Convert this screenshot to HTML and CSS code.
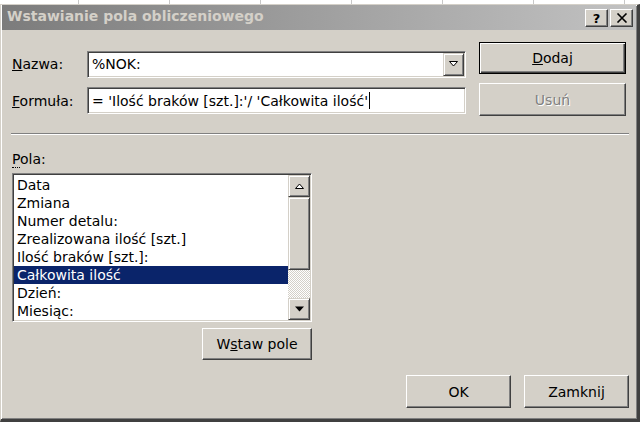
FILE: index.html
```html
<!DOCTYPE html>
<html lang="pl">
<head>
    <meta charset="utf-8">
    <title>Wstawianie pola obliczeniowego</title>
    <link rel="stylesheet" href="styles.css">
</head>
<body>
    <div class="sheet"></div>
    <div class="dialog">
        <div class="titlebar">
            <span class="title">Wstawianie pola obliczeniowego</span>
            <span class="tbtn help">?</span>
            <span class="tbtn close">
                <svg width="12" height="10" viewBox="0 0 12 10"><path d="M1.5 0.5 L10.5 9.5 M10.5 0.5 L1.5 9.5" stroke="#000" stroke-width="1.6" fill="none"/></svg>
            </span>
        </div>
        <div class="content">
            <div class="top">
                <div class="fields">
                    <label><u>N</u>azwa:</label>
                    <div class="field combo">
                        <span class="val">%NOK:</span>
                        <span class="drop"><svg width="9" height="6" viewBox="0 0 9 6"><path d="M0.5 0.5 H8.5 L4.5 5 Z" fill="#fff" stroke="#000" stroke-width="1"/></svg></span>
                    </div>
                    <label><u>F</u>ormuła:</label>
                    <div class="field">
                        <span class="val">= 'Ilość braków [szt.]:'/ 'Całkowita ilość'</span><span class="caret"></span>
                    </div>
                </div>
                <div class="side">
                    <div class="btn default"><u>D</u>odaj</div>
                    <div class="btn disabled">Usuń</div>
                </div>
            </div>
            <div class="sep"></div>
            <div class="fieldlist">
                <div class="list-label"><span class="dotted">P</span>ola:</div>
                <div class="listbox">
                    <ul class="items">
                        <li>Data</li>
                        <li>Zmiana</li>
                        <li>Numer detalu:</li>
                        <li>Zrealizowana ilość [szt.]</li>
                        <li>Ilość braków [szt.]:</li>
                        <li class="selected">Całkowita ilość</li>
                        <li>Dzień:</li>
                        <li>Miesiąc:</li>
                    </ul>
                    <div class="scrollbar">
                        <div class="sbtn"><svg width="9" height="6" viewBox="0 0 9 6"><path d="M0.5 5.5 H8.5 L4.5 1 Z" fill="#fff" stroke="#000" stroke-width="1"/></svg></div>
                        <div class="thumb"></div>
                        <div class="track"></div>
                        <div class="sbtn"><svg width="9" height="6" viewBox="0 0 9 6"><path d="M0 0.5 H9 L4.5 5.5 Z" fill="#000"/></svg></div>
                    </div>
                </div>
                <div class="btn insert">W<u>s</u>taw pole</div>
            </div>
            <div class="footer">
                <div class="btn">OK</div>
                <div class="btn">Zamknij</div>
            </div>
        </div>
    </div>
</body>
</html>
```

FILE: styles.css
```css
* { box-sizing: border-box; }
body { margin: 0; width: 640px; height: 422px; overflow: hidden; background: #fff; font-family: "DejaVu Sans", sans-serif; font-size: 14px; color: #000; }
.sheet { height: 4px; background: #fff linear-gradient(to right, #c8c8c8 1px, transparent 1px) 78px 0 / 91px 100% repeat-x; }
.dialog { height: 418px; background: #d4d0c8; border-top: 1px solid #d4d0c8; border-left: 1px solid #d4d0c8; border-right: 3px solid #404040; border-bottom: 3px solid #404040; box-shadow: inset 1px 1px #fff, inset -1px -1px #808080; padding-left: 1px; }

.titlebar { height: 25px; margin-right: 1px; display: flex; align-items: flex-start; background: linear-gradient(to right, #7c7c7c, #c2c2c2); padding-right: 3px; }
.title { flex: 1; padding: 3px 0 0 5px; font-weight: bold; font-size: 14px; color: #d4d0c8; }
.tbtn { width: 23px; height: 18px; margin-top: 4px; margin-left: 2px; display: flex; align-items: center; justify-content: center; background: #d4d0c8; border: 1px solid; border-color: #fff #404040 #404040 #fff; box-shadow: inset -1px -1px #808080; font-weight: bold; font-size: 13px; line-height: 1; }

.content { padding: 12px 8px 0 10px; }
.top { display: flex; gap: 13px; }
.fields { width: 454px; padding-top: 7px; display: grid; grid-template-columns: 75px 1fr; row-gap: 6px; align-items: center; }
.field { height: 27px; display: flex; align-items: center; background: #fff; border: 1px solid; border-color: #808080 #fff #fff #808080; box-shadow: inset 1px 1px #404040, inset -1px -1px #d4d0c8; padding-left: 4px; }
.val { white-space: pre; }
.combo .val { flex: 1; }
.drop { width: 21px; height: 23px; margin-right: 1px; display: flex; align-items: center; justify-content: center; background: #d4d0c8; border: 1px solid; border-color: #d4d0c8 #404040 #404040 #d4d0c8; box-shadow: inset 1px 1px #fff, inset -1px -1px #808080; }
.caret { width: 1px; height: 17px; background: #000; margin-left: 1px; }

.side { width: 147px; display: flex; flex-direction: column; gap: 9px; }
.btn { height: 33px; display: flex; align-items: center; justify-content: center; background: #d4d0c8; border: 1px solid; border-color: #fff #404040 #404040 #fff; box-shadow: inset -1px -1px #808080; }
.btn.default { height: 32px; border-color: #000; box-shadow: inset 1px 1px #fff, inset -1px -1px #404040, inset -2px -2px #808080; }
.btn.disabled { color: #808080; text-shadow: 1px 1px #fff; }

.sep { height: 2px; margin: 17px 0 0 -1px; border-top: 1px solid #808080; border-bottom: 1px solid #fff; }

.fieldlist { width: 300px; display: flex; flex-direction: column; }
.list-label { margin-top: 16px; line-height: 17px; }
.dotted { border-bottom: 1px dotted #000; }
.listbox { margin-top: 5px; height: 149px; display: flex; background: #fff; border: 1px solid; border-color: #808080 #fff #fff #808080; box-shadow: inset 1px 1px #404040, inset -1px -1px #d4d0c8; padding: 1px; }
.items { flex: 1; margin: 0; padding: 1px 0 0; list-style: none; }
.items li { height: 18px; line-height: 18px; padding-left: 3px; white-space: nowrap; }
.items li.selected { background: #0a246a; color: #fff; }
.scrollbar { width: 22px; display: flex; flex-direction: column; }
.sbtn, .thumb { display: flex; align-items: center; justify-content: center; background: #d4d0c8; border: 1px solid; border-color: #d4d0c8 #404040 #404040 #d4d0c8; box-shadow: inset 1px 1px #fff, inset -1px -1px #808080; }
.sbtn { height: 22px; }
.thumb { height: 73px; }
.track { flex: 1; background: repeating-conic-gradient(#fff 0 25%, #d4d0c8 0 50%) 0 0 / 2px 2px; }
.btn.insert { align-self: flex-end; width: 110px; height: 32px; margin-top: 6px; }

.footer { margin-top: 15px; display: flex; justify-content: flex-end; gap: 13px; }
.footer .btn { width: 105px; }
```
